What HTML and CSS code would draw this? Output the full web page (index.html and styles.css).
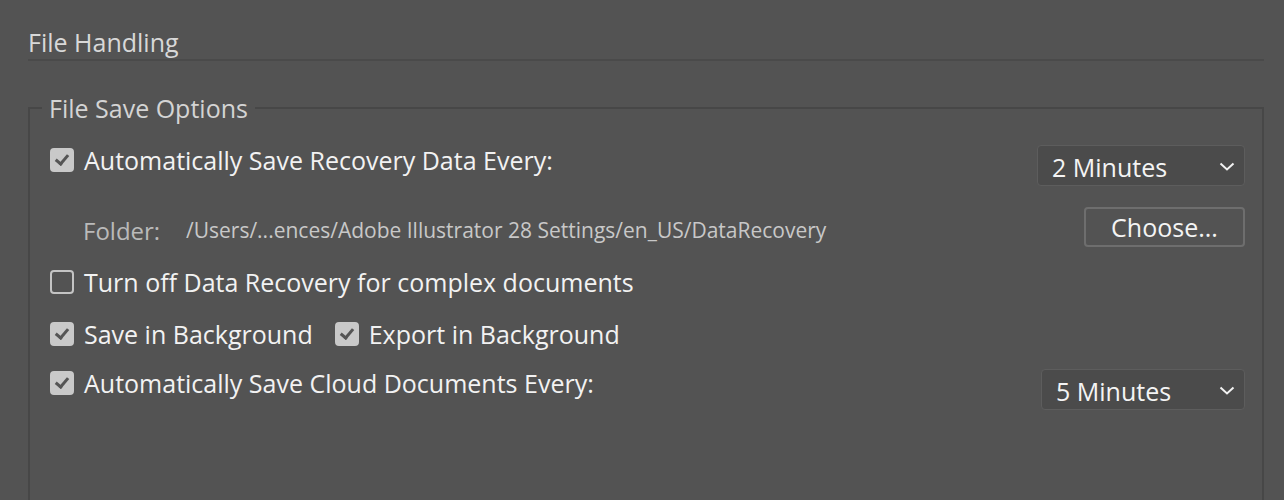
FILE: index.html
```html
<!DOCTYPE html>
<html lang="en">
<head>
	<title>File Handling</title>
	<meta charset="utf-8">
	<link rel="stylesheet" href="styles.css">
</head>
<body>
	<div id="panel">
		<h2 class="section-title">File Handling</h2>
		<fieldset class="group">
			<legend>File Save Options</legend>

			<div class="row first">
				<label class="check"><span class="box on"></span>Automatically Save Recovery Data Every:</label>
				<div class="dropdown">2 Minutes
					<svg class="chev" width="16" height="9" viewBox="0 0 16 9"><polyline points="1.5,1.5 8,7.5 14.5,1.5" fill="none" stroke="#f2f2f2" stroke-width="2"/></svg>
				</div>
			</div>

			<div class="row folder">
				<span class="folder-label">Folder:</span>
				<span class="path">/Users/...ences/Adobe Illustrator 28 Settings/en_US/DataRecovery</span>
				<button class="btn">Choose...</button>
			</div>

			<div class="row third">
				<label class="check"><span class="box"></span>Turn off Data Recovery for complex documents</label>
			</div>

			<div class="row fourth">
				<label class="check"><span class="box on"></span>Save in Background</label>
				<label class="check second"><span class="box on"></span>Export in Background</label>
			</div>

			<div class="row last">
				<label class="check"><span class="box on"></span>Automatically Save Cloud Documents Every:</label>
				<div class="dropdown small">5 Minutes
					<svg class="chev" width="16" height="9" viewBox="0 0 16 9"><polyline points="1.5,1.5 8,7.5 14.5,1.5" fill="none" stroke="#f2f2f2" stroke-width="2"/></svg>
				</div>
			</div>
		</fieldset>
	</div>
</body>
</html>
```

FILE: styles.css
```css
body {
	margin: 0;
	padding: 0;
	background: #535353;
	font-family: "Open Sans", "Noto Sans", sans-serif;
	font-weight: 500;
	color: #f2f2f2;
}

#panel {
	padding: 27px 20px 0 28px;
	height: 473px;
	overflow: hidden;
}

.section-title {
	margin: 0;
	font-size: 25px;
	font-weight: 500;
	line-height: 30px;
	color: #d8d8d8;
	padding-bottom: 2px;
	border-bottom: 2px solid #4a4a4a;
}

.group {
	margin: 34px 0 0 0;
	padding: 18px 17px 200px 20px;
	border: 2px solid #474747;
	min-width: 0;
}

.group legend {
	margin-left: -8px;
	padding: 0 7px;
	font-size: 25px;
	line-height: 26px;
	color: #d4d4d4;
}

.row {
	display: flex;
	align-items: center;
	height: 42px;
}

.row.folder {
	margin-top: 28px;
	padding-left: 33px;
}

.row.third,
.row.fourth {
	margin-top: 10px;
}

.row.last {
	margin-top: 7px;
}

.check {
	display: flex;
	align-items: center;
	font-size: 25px;
	line-height: 30px;
	white-space: nowrap;
}

.check.second {
	margin-left: 22px;
}

.box {
	width: 20px;
	height: 20px;
	border: 2px solid #c4c4c4;
	border-radius: 4px;
	margin-right: 10px;
	position: relative;
	flex: none;
}

.box.on {
	background: #c9c9c9;
	border-color: #c9c9c9;
}

.box.on::after {
	content: "";
	position: absolute;
	left: 6px;
	top: 2px;
	width: 5px;
	height: 10px;
	border-right: 3px solid #555;
	border-bottom: 3px solid #555;
	transform: rotate(40deg);
}

.dropdown {
	margin-left: auto;
	align-self: flex-start;
	margin-top: 6px;
	width: 192px;
	height: 39px;
	padding-left: 14px;
	box-sizing: content-box;
	background: #4b4b4b;
	border: 1px solid #5d5d5d;
	border-radius: 4px;
	font-size: 25px;
	line-height: 42px;
	color: #f4f4f4;
	position: relative;
}

.dropdown.small {
	width: 188px;
	margin-top: 7px;
}

.chev {
	position: absolute;
	right: 9px;
	top: 16px;
}

.folder-label {
	font-size: 24px;
	color: #bababa;
	width: 103px;
}

.path {
	font-size: 21px;
	font-weight: normal;
	color: #c8c8c8;
}

.btn {
	margin-left: auto;
	align-self: flex-start;
	margin-top: -2px;
	width: 161px;
	height: 40px;
	background: #535353;
	border: 2px solid #6e6e6e;
	border-radius: 4px;
	font-family: inherit;
	font-weight: 500;
	font-size: 25px;
	line-height: 34px;
	color: #f4f4f4;
	padding: 0;
}
```
